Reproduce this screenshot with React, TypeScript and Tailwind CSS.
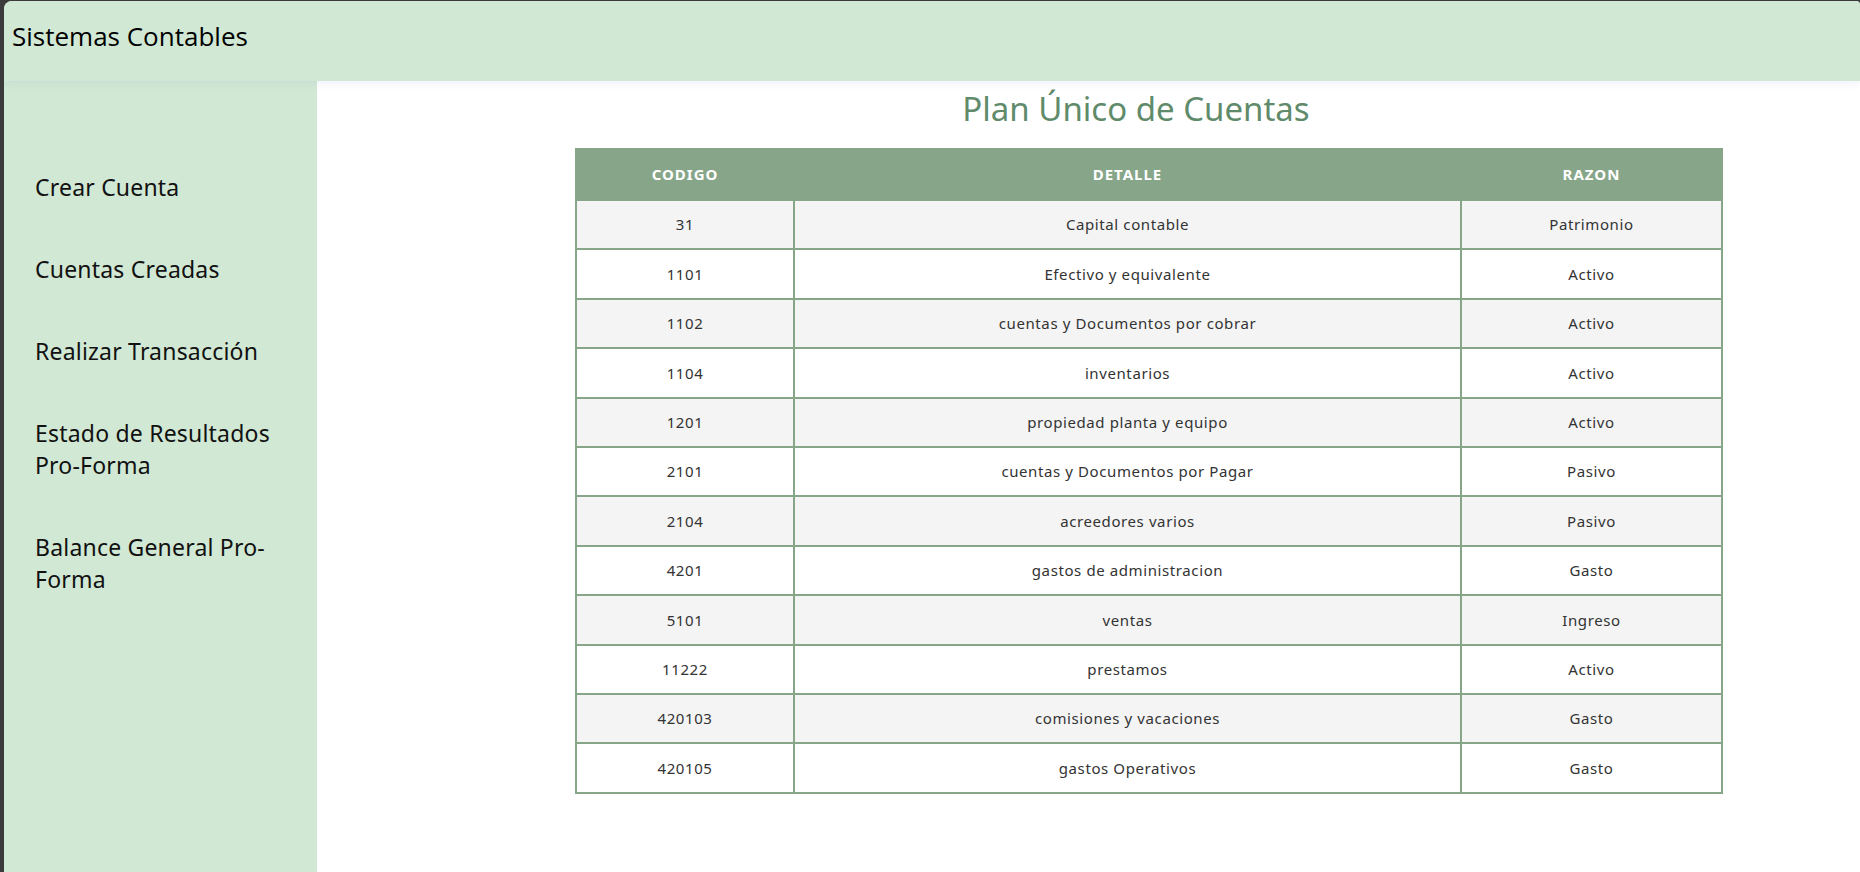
import React from "react";

type Cuenta = { codigo: string; detalle: string; razon: string };

const cuentas: Cuenta[] = [
  { codigo: "31", detalle: "Capital contable", razon: "Patrimonio" },
  { codigo: "1101", detalle: "Efectivo y equivalente", razon: "Activo" },
  { codigo: "1102", detalle: "cuentas y Documentos por cobrar", razon: "Activo" },
  { codigo: "1104", detalle: "inventarios", razon: "Activo" },
  { codigo: "1201", detalle: "propiedad planta y equipo", razon: "Activo" },
  { codigo: "2101", detalle: "cuentas y Documentos por Pagar", razon: "Pasivo" },
  { codigo: "2104", detalle: "acreedores varios", razon: "Pasivo" },
  { codigo: "4201", detalle: "gastos de administracion", razon: "Gasto" },
  { codigo: "5101", detalle: "ventas", razon: "Ingreso" },
  { codigo: "11222", detalle: "prestamos", razon: "Activo" },
  { codigo: "420103", detalle: "comisiones y vacaciones", razon: "Gasto" },
  { codigo: "420105", detalle: "gastos Operativos", razon: "Gasto" },
];

const menu = [
  "Crear Cuenta",
  "Cuentas Creadas",
  "Realizar Transacción",
  "Estado de Resultados Pro-Forma",
  "Balance General Pro-Forma",
];

function Sidebar() {
  return (
    <aside className="w-[313px] shrink-0 bg-[#d1e8d4] pl-[31px] pr-[30px] pt-[90px]">
      <ul className="flex flex-col gap-[50px]">
        {menu.map((item) => (
          <li
            key={item}
            className="text-[23px] leading-[32px] tracking-[0.2px] text-[#111] cursor-pointer"
            style={{ fontFamily: '"Noto Sans", sans-serif' }}
          >
            {item}
          </li>
        ))}
      </ul>
    </aside>
  );
}

function TablaCuentas() {
  return (
    <table className="w-[1146px] table-fixed border-collapse text-center">
      <colgroup>
        <col className="w-[218px]" />
        <col className="w-[667px]" />
        <col className="w-[261px]" />
      </colgroup>
      <thead>
        <tr className="bg-[#87a689] h-[51px]">
          <th className="border-2 border-[#87a689] text-[15px] font-bold tracking-[1px] text-white">CODIGO</th>
          <th className="border-2 border-[#87a689] text-[15px] font-bold tracking-[1px] text-white">DETALLE</th>
          <th className="border-2 border-[#87a689] text-[15px] font-bold tracking-[1px] text-white">RAZON</th>
        </tr>
      </thead>
      <tbody>
        {cuentas.map((c, i) => (
          <tr key={c.codigo} className={i % 2 === 0 ? "bg-[#f4f4f4] h-[49.4px]" : "bg-white h-[49.4px]"}>
            <td className="border-2 border-[#87a689] text-[15px] tracking-[0.6px] text-[#333]">{c.codigo}</td>
            <td className="border-2 border-[#87a689] text-[15px] tracking-[0.6px] text-[#333]">{c.detalle}</td>
            <td className="border-2 border-[#87a689] text-[15px] tracking-[0.6px] text-[#333]">{c.razon}</td>
          </tr>
        ))}
      </tbody>
    </table>
  );
}

export default function App() {
  return (
    <div className="h-screen bg-[#3b3b3b] pl-[4px] pt-[1px] overflow-hidden">
      <div className="flex h-full flex-col rounded-tl-lg rounded-tr-sm bg-[#d1e8d4] overflow-hidden">
        <header className="relative z-10 h-[80px] shrink-0 bg-[#d1e8d4] px-[8px] pt-[18px] shadow-[0_2px_8px_rgba(120,140,220,0.12)]">
          <h1
            className="text-[26px] leading-[34px] text-black"
            style={{ fontFamily: '"Open Sans", sans-serif' }}
          >
            Sistemas Contables
          </h1>
        </header>
        <div className="flex flex-1 min-h-0">
          <Sidebar />
          <main
            className="flex-1 bg-white pl-[258px]"
            style={{ fontFamily: '"Noto Sans", sans-serif' }}
          >
            <div className="w-[1146px]">
              <h2 className="mt-[6px] mb-[17px] pr-[24px] text-center text-[33px] leading-[44px] text-[#5f8b6b]">
                Plan Único de Cuentas
              </h2>
              <TablaCuentas />
            </div>
          </main>
        </div>
      </div>
    </div>
  );
}
